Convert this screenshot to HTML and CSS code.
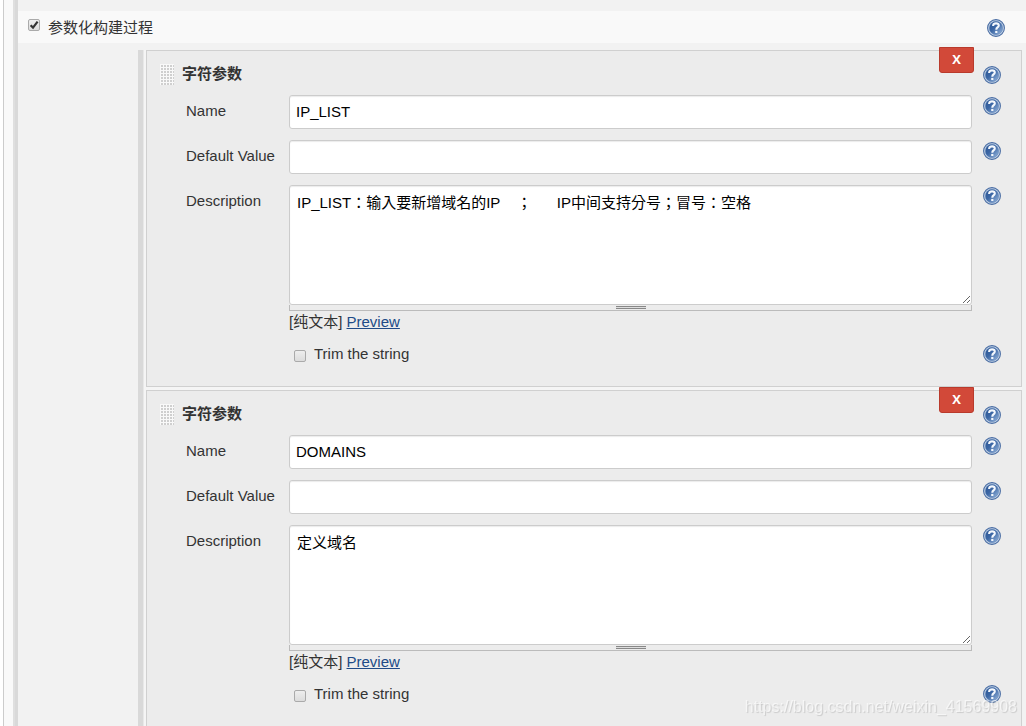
FILE: index.html
```html
<!DOCTYPE html>
<html lang="zh-CN">
<head>
<meta charset="utf-8">
<title>参数化构建过程</title>
<link rel="stylesheet" href="styles.css">
</head>
<body>
<svg class="defs" aria-hidden="true">
  <defs>
    <linearGradient id="disc" x1="0" y1="0" x2="1" y2="1">
      <stop offset="0" stop-color="#2a5594"/><stop offset=".45" stop-color="#3c67a5"/><stop offset="1" stop-color="#9dbbe0"/>
    </linearGradient>
    <symbol id="help" viewBox="0 0 18 18">
      <circle cx="9" cy="9" r="8.4" fill="#c9d8ea" stroke="#4a6da3" stroke-width="1.1"/>
      <circle cx="9" cy="9" r="6.7" fill="url(#disc)" stroke="#5c80b4" stroke-width=".5"/>
      <path d="M6.2 7V6.2Q6.5 4.4 9.1 4.4T11.8 6.5Q11.8 7.6 10.4 8.5Q9.3 9.2 9.3 10.8" fill="none" stroke="#f4f8fd" stroke-width="2.1"/>
      <path d="M8.2 11.9h2.2v2.1H8.2z" fill="#f4f8fd"/>
    </symbol>
  </defs>
</svg>
<main class="config">
  <div class="option">
    <input type="checkbox" id="parameterized" class="check" checked>
    <label for="parameterized">参数化构建过程</label>
    <button type="button" class="help" aria-label="Help"><svg><use href="#help"/></svg></button>
  </div>
  <div class="nested">
    <section class="card">
      <button type="button" class="delete">X</button>
      <header class="head">
        <span class="grip"></span>
        <h2>字符参数</h2>
        <button type="button" class="help" aria-label="Help"><svg><use href="#help"/></svg></button>
      </header>
      <div class="row">
        <label for="name1">Name</label>
        <input type="text" id="name1" class="text" value="IP_LIST">
        <button type="button" class="help" aria-label="Help"><svg><use href="#help"/></svg></button>
      </div>
      <div class="row">
        <label for="default1">Default Value</label>
        <input type="text" id="default1" class="text">
        <button type="button" class="help" aria-label="Help"><svg><use href="#help"/></svg></button>
      </div>
      <div class="row">
        <label for="desc1">Description</label>
        <div class="field">
          <textarea id="desc1" class="area" lang="zh-TW">IP_LIST：输入要新增域名的IP    ；      IP中间支持分号；冒号：空格</textarea>
          <div class="handle"></div>
          <p class="format">[纯文本] <a href="#preview">Preview</a></p>
        </div>
        <button type="button" class="help" aria-label="Help"><svg><use href="#help"/></svg></button>
      </div>
      <div class="row trim">
        <div class="choice"><input type="checkbox" id="trim1" class="check"><label for="trim1">Trim the string</label></div>
        <button type="button" class="help" aria-label="Help"><svg><use href="#help"/></svg></button>
      </div>
    </section>
    <section class="card">
      <button type="button" class="delete">X</button>
      <header class="head">
        <span class="grip"></span>
        <h2>字符参数</h2>
        <button type="button" class="help" aria-label="Help"><svg><use href="#help"/></svg></button>
      </header>
      <div class="row">
        <label for="name2">Name</label>
        <input type="text" id="name2" class="text" value="DOMAINS">
        <button type="button" class="help" aria-label="Help"><svg><use href="#help"/></svg></button>
      </div>
      <div class="row">
        <label for="default2">Default Value</label>
        <input type="text" id="default2" class="text">
        <button type="button" class="help" aria-label="Help"><svg><use href="#help"/></svg></button>
      </div>
      <div class="row">
        <label for="desc2">Description</label>
        <div class="field">
          <textarea id="desc2" class="area">定义域名</textarea>
          <div class="handle"></div>
          <p class="format">[纯文本] <a href="#preview">Preview</a></p>
        </div>
        <button type="button" class="help" aria-label="Help"><svg><use href="#help"/></svg></button>
      </div>
      <div class="row trim">
        <div class="choice"><input type="checkbox" id="trim2" class="check"><label for="trim2">Trim the string</label></div>
        <button type="button" class="help" aria-label="Help"><svg><use href="#help"/></svg></button>
      </div>
    </section>
  </div>
</main>
<div class="watermark">https://blog.csdn.net/weixin_41569908</div>
</body>
</html>
```
FILE: styles.css
```css
* { box-sizing: border-box; }
html { height: 100%; overflow: hidden; }
body {
  margin: 0;
  min-height: 100%;
  padding-left: 3px;
  background: #fff;
  color: #333;
  font: 15px/20px "Liberation Sans", "Noto Sans CJK SC", sans-serif;
}
.defs { position: absolute; width: 0; height: 0; }
.config {
  min-height: 100vh;
  border-left: 1px solid #ccc;
  padding: 11px 0 0 14px;
  background: linear-gradient(to right, #f9f9f9 9px, #dfdfdf 9px, #dfdfdf 11px, #d9d9d9 11px, #d9d9d9 14px, #f2f2f2 14px);
}
.option {
  display: flex;
  align-items: center;
  height: 32px;
  padding: 0 21px 0 10px;
  background: #f9f9f9;
}
.option label { flex: 1; margin: 2px 0 0 8px; }
.option .check { margin-bottom: 4px; }
.option .help { margin-top: 2px; }
.check {
  appearance: none;
  flex: none;
  width: 12px;
  height: 12px;
  margin: 0;
  border: 1px solid #aaa;
  border-radius: 2px;
  background: linear-gradient(#eee, #dcdcdc);
}
.check:checked {
  background: url("data:image/svg+xml,%3Csvg xmlns='http://www.w3.org/2000/svg' viewBox='0 0 10 10'%3E%3Cpath d='M1.6 5.2 4 7.6 8.6 1.6' fill='none' stroke='%23333' stroke-width='2.2'/%3E%3C/svg%3E") center / 10px, linear-gradient(#eee, #dcdcdc);
}
.help {
  width: 18px;
  height: 18px;
  padding: 0;
  border: 0;
  background: none;
}
.help svg { display: block; width: 18px; height: 18px; }
.nested {
  display: grid;
  gap: 3px;
  margin: 7px 4px 0 120px;
  padding-left: 3px;
  border-left: 5px solid #d9d9d9;
  background: linear-gradient(to right, #e8e8e8 1px, #f5f5f5 1px);
}
.card {
  position: relative;
  border: 1px solid #d0d0d0;
  padding: 13px 20px 22px 13px;
  background: #ececec;
}
.delete {
  position: absolute;
  top: -4px;
  right: 47px;
  width: 35px;
  height: 26px;
  padding: 0 0 2px;
  border: 1px solid #b93a2c;
  border-radius: 0 0 3px 3px;
  background: #d24939;
  color: #fff;
  font: bold 13px/20px "Open Sans", sans-serif;
}
.head { display: flex; align-items: flex-start; height: 31px; }
.head h2 {
  flex: 1;
  margin: 0 0 0 8px;
  font-size: 15px;
  line-height: 20px;
}
.head .help { margin-top: 2px; }
.grip {
  width: 14px;
  height: 21px;
  background: conic-gradient(#f9f9f9 25%, #f9f9f9 50%, #f9f9f9 50%, #f9f9f9 0);
  background:
    linear-gradient(#f9f9f9 1px, transparent 1px) 0 0 / 3px 3px,
    linear-gradient(to right, #f9f9f9 1px, #cfcfcf 1px) 0 0 / 3px 3px;
}
.row {
  display: grid;
  grid-template-columns: 92px 1fr 18px;
  column-gap: 11px;
  align-items: start;
  margin: 0 0 11px 26px;
}
.row > label { margin-top: 6px; white-space: nowrap; }
.row .help { margin-top: 2px; }
.text, .area {
  display: block;
  width: 100%;
  border: 1px solid #ccc;
  border-radius: 3px;
  background: #fff;
  box-shadow: inset 0 1px 1px rgba(0, 0, 0, .08);
  color: #000;
  font: 15px/20px "Liberation Sans", "Noto Sans CJK SC", sans-serif;
}
.area:lang(zh-TW) { font-family: "Liberation Sans", "Noto Sans CJK TC", sans-serif; }
.text { height: 34px; padding: 0 6px 2px; }
.area { height: 120px; padding: 7px; resize: vertical; }
.handle {
  height: 6px;
  border: solid #bbb;
  border-width: 0 1px 1px;
  background: linear-gradient(#888 1px, #ddd 1px, #ddd 2px, #888 2px, #888 3px, transparent 3px) center 1px / 30px 4px no-repeat;
}
.format { margin: 1px 0 0; }
.format a { color: #204a87; }
.trim { margin: 12px 0 0 26px; }
.row + .trim { margin-top: 12px; }
.choice { grid-column: 2; display: flex; padding-left: 5px; }
.choice .check { margin-top: 6px; }
.choice label { margin-left: 8px; }
.trim .help { grid-column: 3; margin-top: 1px; }
.watermark {
  position: fixed;
  right: 9px;
  bottom: 9px;
  color: rgba(255, 255, 255, .6);
  font-size: 16px;
  text-shadow: 1px 1px 1px rgba(0, 0, 0, .14);
  pointer-events: none;
}
```
